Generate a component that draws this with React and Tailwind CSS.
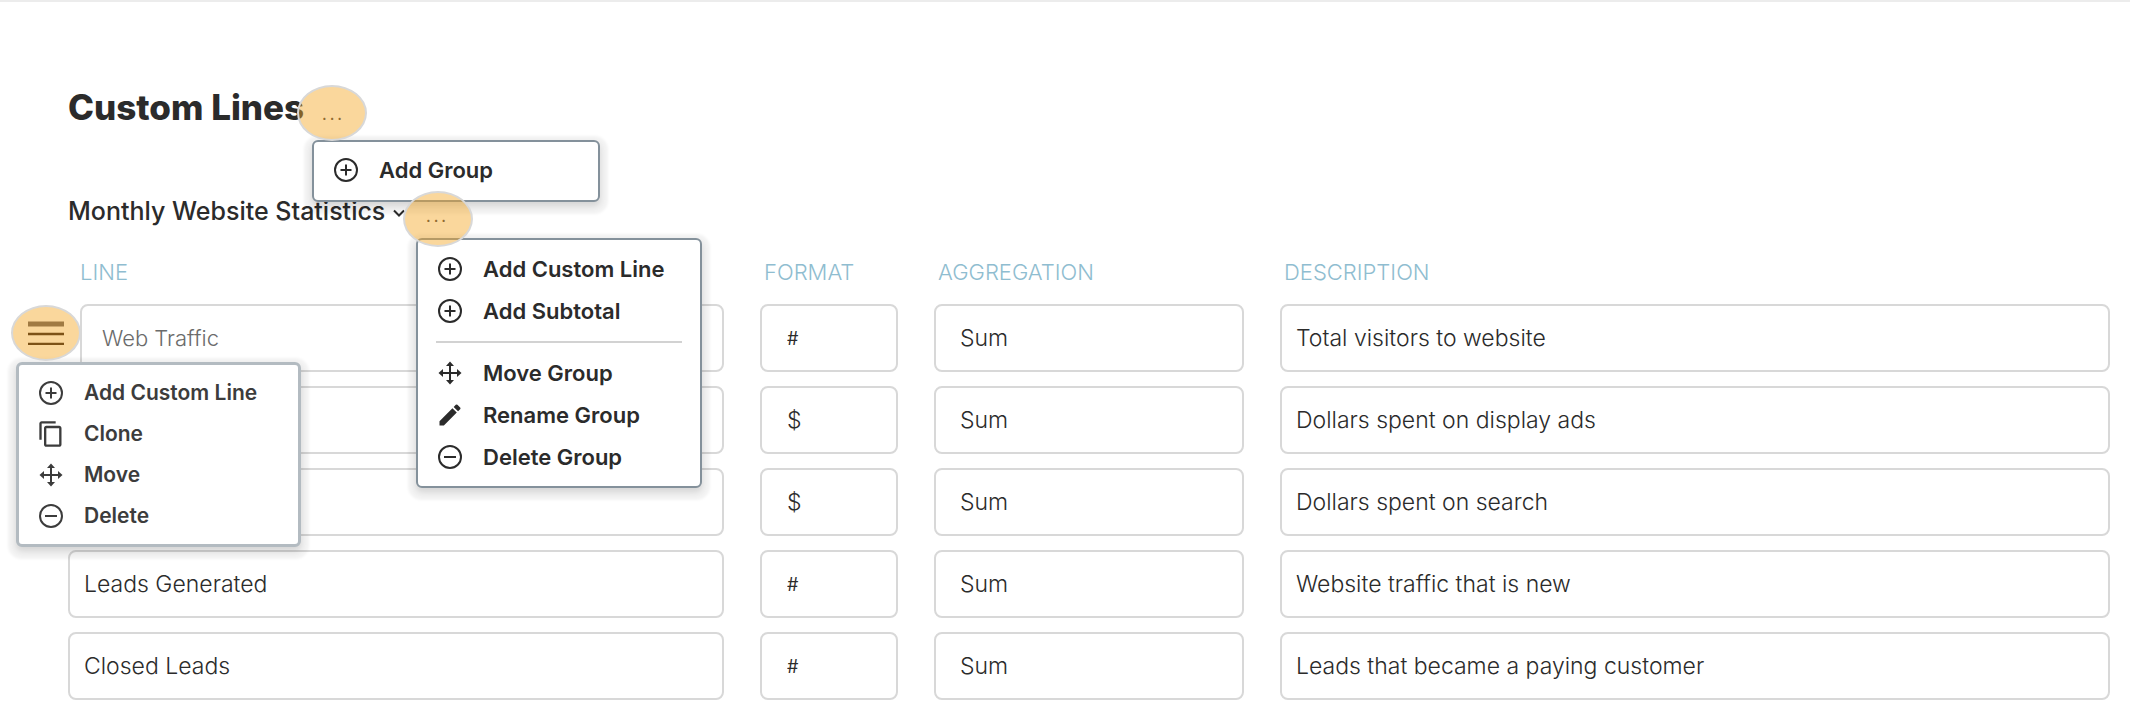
import React from "react";
import { MdOutlineContentCopy, MdEdit } from "react-icons/md";

const columns = ["Line", "Format", "Aggregation", "Description"];

const lines = [
  { name: "Web Traffic", format: "#", aggregation: "Sum", description: "Total visitors to website" },
  { name: "", format: "$", aggregation: "Sum", description: "Dollars spent on display ads" },
  { name: "", format: "$", aggregation: "Sum", description: "Dollars spent on search" },
  { name: "Leads Generated", format: "#", aggregation: "Sum", description: "Website traffic that is new" },
  { name: "Closed Leads", format: "#", aggregation: "Sum", description: "Leads that became a paying customer" },
];

const rowGrid =
  "grid grid-cols-[minmax(0,656fr)_minmax(0,138fr)_minmax(0,310fr)_minmax(0,830fr)] gap-9";

const field =
  "block h-[68px] w-full appearance-none rounded-lg border-2 border-[#d8d8d8] bg-white outline-none";

const menu =
  "absolute z-10 flex flex-col rounded-md bg-white leading-7 font-semibold shadow-[0_4px_6px_rgba(0,0,0,0.12),0_4px_3px_8px_rgba(0,0,0,0.05)]";

const ellipse =
  "absolute z-20 flex h-14 w-[70px] justify-center rounded-[50%] border-2 border-[#d8d8d8] bg-[#f5a623]/45";

const dots = "text-[28px] font-extralight text-[#8f6a30]";

const CircleIcon = ({ plus }) => (
  <svg viewBox="0 0 24 24" className="size-6" fill="none" stroke="currentColor" strokeWidth="2">
    <circle cx="12" cy="12" r="11" />
    <path d={plus ? "M6.5 12h11M12 6.5v11" : "M6 12h12"} />
  </svg>
);

const MoveIcon = () => (
  <svg viewBox="0 0 24 24" className="size-6" fill="currentColor">
    <path d="M12 .5l4 4.500h-3V11h6V8l4.500 4-4.500 4v-3h-6v6h3l-4 4.500L8 19h3v-6H5v3L.5 12 5 8v3h6V5H8z" />
  </svg>
);

const MenuItem = ({ icon, children }) => (
  <li>
    <button type="button" className="flex w-full items-center gap-[21px] pl-0.5 text-left whitespace-nowrap">
      <span className="flex size-6 shrink-0 items-center justify-center">{icon}</span>
      {children}
    </button>
  </li>
);

const LineMenu = () => (
  <>
    <button type="button" aria-label="Line options" className={`${ellipse} top-px -left-[57px] items-center`}>
      <svg viewBox="0 0 36 24" className="h-6 w-9">
        <path d="M0 3h36" stroke="#a07a42" strokeWidth="5" />
        <path d="M0 13h36M0 23h36" stroke="#7d5216" strokeWidth="2.500" />
      </svg>
    </button>
    <ul className={`${menu} top-[58px] -left-[52px] w-[285px] gap-[13px] border-3 border-[#b3bbc1] px-[18px] py-3.5 text-[21px] text-[#3c3c3c]`}>
      <MenuItem icon={<CircleIcon plus />}>Add Custom Line</MenuItem>
      <MenuItem icon={<MdOutlineContentCopy className="size-7 shrink-0" />}>Clone</MenuItem>
      <MenuItem icon={<MoveIcon />}>Move</MenuItem>
      <MenuItem icon={<CircleIcon />}>Delete</MenuItem>
    </ul>
  </>
);

const App = () => {
  return (
    <main className="border-t-2 border-[#ececec] bg-white pt-20 pr-5 pb-6 pl-[68px] font-['Inter','Liberation_Sans',sans-serif] text-[#2b2b2b]">
      <header className="relative w-fit">
        <h1 className="text-[35px] leading-[50px] font-extrabold">Custom Lines</h1>
        <button type="button" aria-label="Custom lines options" className={`${ellipse} ${dots} top-[3px] left-[229px] leading-[46px]`}>
          ...
        </button>
        <ul className={`${menu} top-[58px] left-[244px] w-72 border-2 border-[#84919b] px-[18px] pt-3.5 pb-4 text-[22px]`}>
          <MenuItem icon={<CircleIcon plus />}>Add Group</MenuItem>
        </ul>
      </header>

      <section className="pt-[59px]">
        <div className="relative flex w-fit items-center gap-2">
          <h2 className="text-[25px] leading-10 font-medium">Monthly Website Statistics</h2>
          <svg viewBox="0 0 12 8" className="mt-1 h-2 w-3" fill="none" stroke="currentColor" strokeWidth="2">
            <path d="M1 1.500l5 5 5-5" />
          </svg>
          <button type="button" aria-label="Group options" className={`${ellipse} ${dots} top-0 left-[335px] pr-1 leading-[38px]`}>
            ...
          </button>
          <ul className={`${menu} top-[47px] left-[348px] w-[286px] gap-3.5 border-2 border-[#84919b] px-[18px] py-[15px] text-[22px]`}>
            <MenuItem icon={<CircleIcon plus />}>Add Custom Line</MenuItem>
            <MenuItem icon={<CircleIcon plus />}>Add Subtotal</MenuItem>
            <li role="separator" className="my-0.5 border-t-2 border-[#d2d2d2]" />
            <MenuItem icon={<MoveIcon />}>Move Group</MenuItem>
            <MenuItem icon={<MdEdit className="size-7 shrink-0" />}>Rename Group</MenuItem>
            <MenuItem icon={<CircleIcon />}>Delete Group</MenuItem>
          </ul>
        </div>

        <table className="mt-[21px] block">
          <thead className="block">
            <tr className={rowGrid}>
              {columns.map((c, i) => (
                <th
                  key={c}
                  className={`${i === 0 ? "pl-3" : "pl-1"} pt-1 text-left text-[22px] leading-8 font-light text-[#8fbdd0] uppercase`}
                >
                  {c}
                </th>
              ))}
            </tr>
          </thead>
          <tbody className="mt-4 flex flex-col gap-3.5">
            {lines.map((l, i) => (
              <tr key={i} className={rowGrid}>
                <td className={i === 0 ? "relative pl-3" : ""}>
                  <input
                    aria-label="Line"
                    defaultValue={l.name}
                    className={`${field} font-light ${i === 0 ? "px-5 text-[22px] text-[#6b6b6b]" : "px-3.5 text-[23px]"}`}
                  />
                  {i === 0 && <LineMenu />}
                </td>
                <td>
                  <select
                    aria-label="Format"
                    defaultValue={l.format}
                    className={`${field} px-[25px] ${l.format === "#" ? "text-[18px] font-normal" : "text-[23px] font-light"}`}
                  >
                    <option>#</option>
                    <option>$</option>
                  </select>
                </td>
                <td>
                  <select aria-label="Aggregation" className={`${field} px-6 text-[23px] font-light`}>
                    <option>{l.aggregation}</option>
                  </select>
                </td>
                <td>
                  <input aria-label="Description" defaultValue={l.description} className={`${field} px-3.5 text-[23px] font-light`} />
                </td>
              </tr>
            ))}
          </tbody>
        </table>
      </section>
    </main>
  );
};

export default App;
